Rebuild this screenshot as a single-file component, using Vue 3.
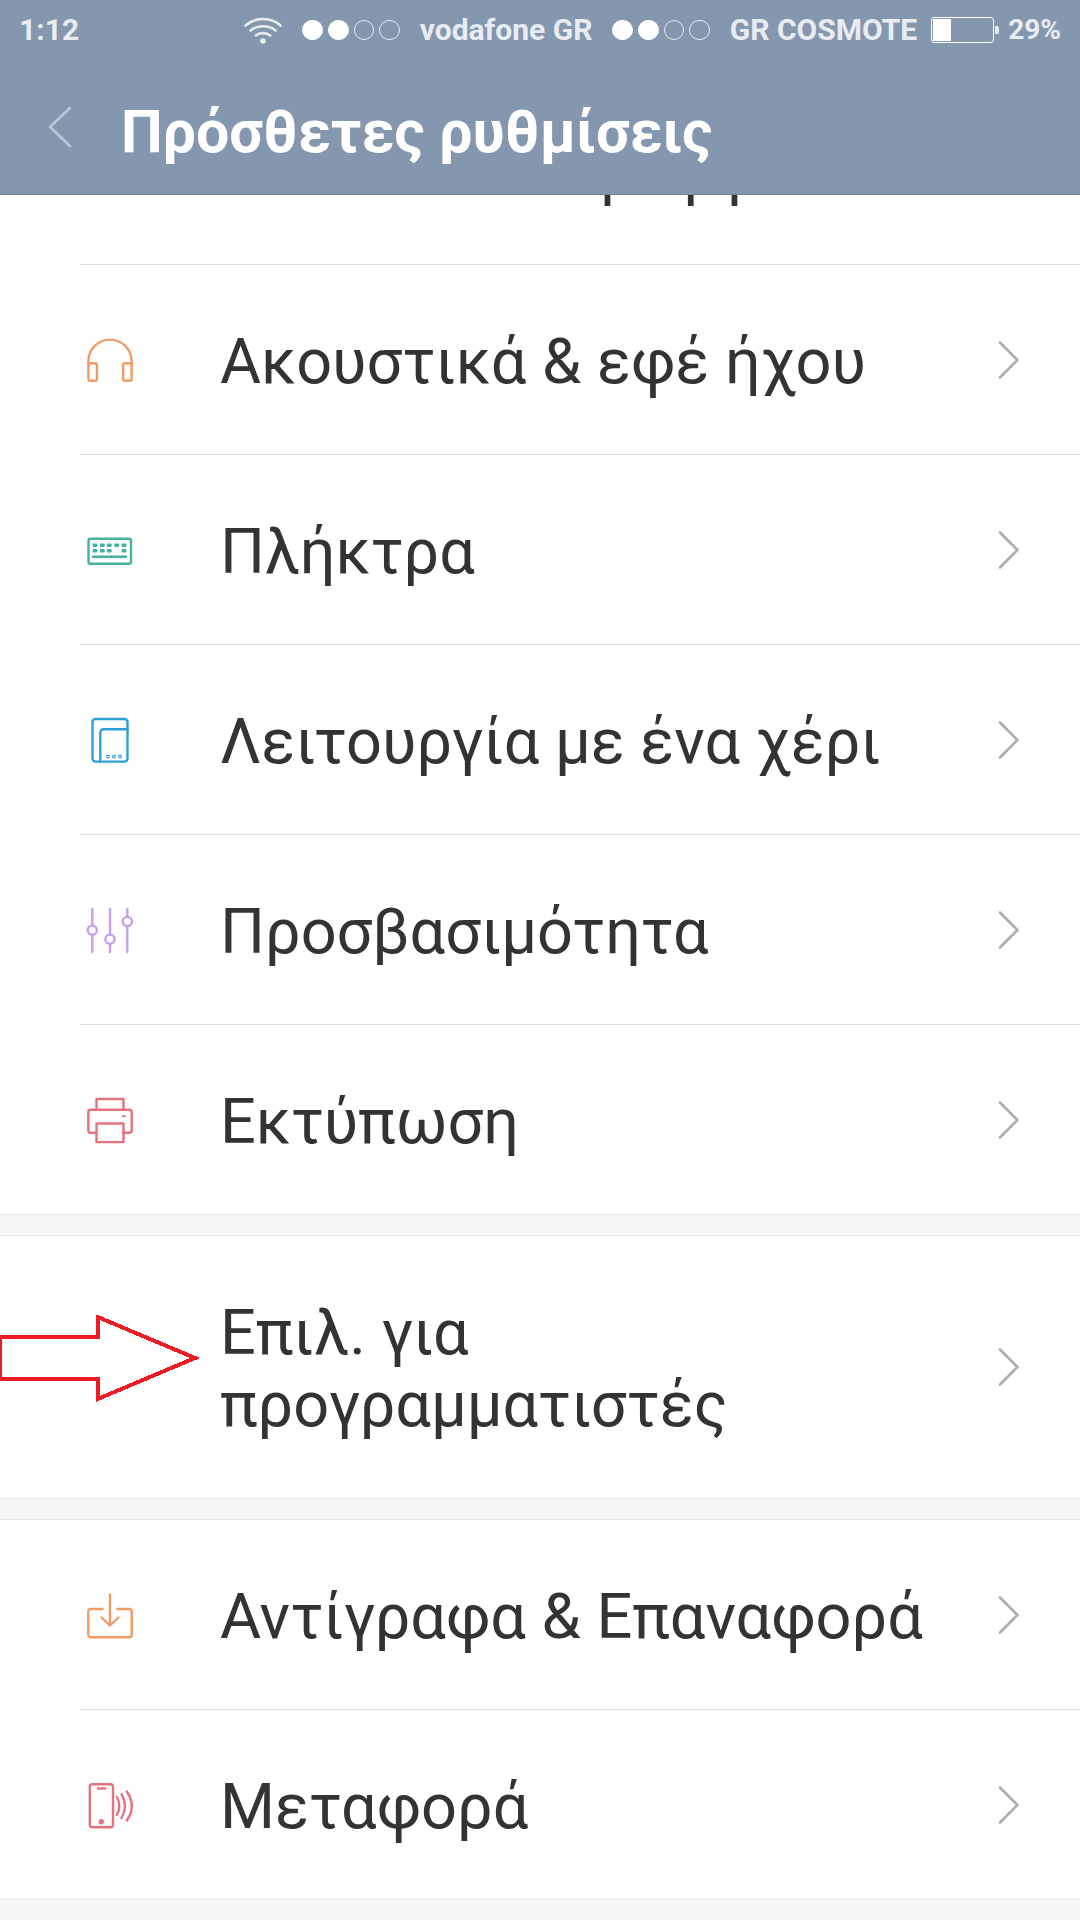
<script setup>
const sections = [
  {
    rows: [
      { label: 'Γλώσσα Εισαγωγή', cut: true },
      { label: 'Ακουστικά & εφέ ήχου', icon: 'headphones' },
      { label: 'Πλήκτρα', icon: 'keyboard' },
      { label: 'Λειτουργία με ένα χέρι', icon: 'hand' },
      { label: 'Προσβασιμότητα', icon: 'sliders' },
      { label: 'Εκτύπωση', icon: 'printer' },
    ],
  },
  { rows: [{ label: 'Επιλ. για προγραμματιστές', tall: true, marked: true }] },
  {
    rows: [
      { label: 'Αντίγραφα & Επαναφορά', icon: 'backup' },
      { label: 'Μεταφορά', icon: 'mover' },
    ],
  },
]
const signals = ['vodafone GR', 'GR COSMOTE']
const keyRows = [
  [15, 22.3, 29.3, 36.7, 44],
  [15, 22.3, 29.3, 44],
]
</script>

<template>
  <div class="screen">
    <header class="header">
      <div class="status">
        <span class="time">1:12</span>
        <svg class="wifi" width="38" height="28" viewBox="0 0 38 28" fill="none" stroke="#e8ecf1" stroke-width="2.6" stroke-linecap="round">
          <path d="M1.5 9.5C11 .8 27 .8 36.5 9.5" />
          <path d="M6.5 14.5C13 8.8 25 8.8 31.5 14.5" />
          <path d="M11.8 19.4C15.5 16.4 22.5 16.4 26.2 19.4" />
          <circle cx="19" cy="25" r="2.8" fill="#e8ecf1" stroke="none" />
        </svg>
        <template v-for="name in signals" :key="name">
          <span class="dots">
            <i class="dot on"></i><i class="dot on"></i><i class="dot"></i><i class="dot"></i>
          </span>
          <span class="carrier">{{ name }}</span>
        </template>
        <span class="battery"><i class="charge"></i></span>
        <span class="percent">29%</span>
      </div>
      <div class="titlebar">
        <svg class="back" width="26" height="44" viewBox="0 0 26 44" fill="none" stroke="#bcc7d4" stroke-width="2.6" stroke-linecap="round" stroke-linejoin="round">
          <path d="M23 3L3 22L23 41" />
        </svg>
        <h1 class="title">Πρόσθετες ρυθμίσεις</h1>
      </div>
    </header>

    <main class="list">
      <section v-for="(section, s) in sections" :key="s" class="section">
        <div v-for="row in section.rows" :key="row.label" class="row" :class="{ cut: row.cut, tall: row.tall }">
          <svg v-if="row.marked" class="pointer" width="202" height="88" viewBox="0 0 202 88" fill="none" stroke="#ed1c24" stroke-width="4" stroke-linejoin="miter" shape-rendering="crispEdges">
            <path d="M0 22.3H97.7V2L195 43L97.7 84V64.3H0Z" />
          </svg>
          <span class="glyph">
            <svg v-if="row.icon" width="60" height="60" viewBox="0 0 60 60" fill="none" stroke-width="2.4" stroke-linecap="round" stroke-linejoin="round" :class="row.icon">
              <template v-if="row.icon === 'headphones'">
                <path d="M8.4 36V31.2a21.6 21.6 0 0 1 43.2 0V36" />
                <rect x="8.4" y="33.2" width="8.5" height="17.6" rx="2" />
                <rect x="43.1" y="33.2" width="8.5" height="17.6" rx="2" />
              </template>
              <template v-else-if="row.icon === 'keyboard'">
                <rect x="8.5" y="18.7" width="42.5" height="25" rx="2" />
                <g v-for="(keys, k) in keyRows" :key="k">
                  <rect v-for="x in keys" :key="x" :x="x - 2.4" :y="23.5 + k * 5.6" width="4.8" height="3.4" rx="1" class="solid" />
                </g>
                <path d="M13 36.8H46" />
              </template>
              <template v-else-if="row.icon === 'hand'">
                <rect x="12.5" y="9" width="35" height="42.6" rx="3" />
                <path d="M20.3 51.6V22.5a3.2 3.2 0 0 1 3.2-3.2H47.5" />
                <circle cx="28" cy="46.5" r="1.4" stroke-width="1.1" />
                <circle cx="34" cy="46.5" r="1.4" stroke-width="1.1" />
                <circle cx="40" cy="46.5" r="1.4" stroke-width="1.1" />
              </template>
              <template v-else-if="row.icon === 'sliders'">
                <path d="M12.3 9V52M30 9V52M47.3 9V52" />
                <circle cx="12.3" cy="30.2" r="4.6" class="hollow" />
                <circle cx="30" cy="39.2" r="4.6" class="hollow" />
                <circle cx="47.3" cy="21.5" r="4.6" class="hollow" />
              </template>
              <template v-else-if="row.icon === 'printer'">
                <path d="M16.5 19.5V9H43.5V19.5" />
                <path d="M16.5 42.8H10.5a2.2 2.2 0 0 1-2.2-2.2V22a2.2 2.2 0 0 1 2.2-2.2H49.5a2.2 2.2 0 0 1 2.2 2.2V40.6a2.2 2.2 0 0 1-2.2 2.2H43.5" />
                <rect x="16.5" y="33.5" width="27" height="18.6" />
                <rect x="41.7" y="25.2" width="4" height="2" rx="1" class="solid" />
              </template>
              <template v-else-if="row.icon === 'backup'">
                <path d="M22.5 24H10.5a2.2 2.2 0 0 0-2.2 2.2V50a2.2 2.2 0 0 0 2.2 2.2H49.5a2.2 2.2 0 0 0 2.2-2.2V26.2a2.2 2.2 0 0 0-2.2-2.2H37.5" />
                <path d="M30 9.5V40.5M21.5 32.5L30 40.5L38.5 32.5" />
              </template>
              <template v-else-if="row.icon === 'mover'">
                <rect x="9.8" y="9.2" width="23.2" height="43" rx="2.5" />
                <path d="M18 13.5H25" />
                <circle cx="21.3" cy="46.7" r="2.7" class="solid" />
                <path d="M36.8 22Q41.8 31 36.8 40M41.5 19.2Q48.5 31 41.5 43M46.8 16.5Q56.8 31 46.8 45.5" />
              </template>
            </svg>
          </span>
          <span class="label">{{ row.label }}</span>
          <svg class="chevron" width="22" height="38" viewBox="0 0 22 38" fill="none" stroke="#adadad" stroke-width="2.6" stroke-linecap="round" stroke-linejoin="round">
            <path d="M2 1.5L19.5 19L2 36.5" />
          </svg>
        </div>
      </section>
    </main>
  </div>
</template>

<style scoped>
.screen {
  width: 1080px;
  height: 1920px;
  display: flex;
  flex-direction: column;
  overflow: hidden;
  background: #f7f7f7;
  font-family: Roboto, "Noto Sans", sans-serif;
}
.header {
  position: relative;
  z-index: 1;
  flex: none;
  height: 195px;
  box-sizing: border-box;
  background: #8497af;
  border-bottom: 1px solid #6e8098;
}
.status {
  display: flex;
  align-items: center;
  height: 60px;
  padding: 0 19px;
  color: #e8ecf1;
  font-size: 30px;
  font-weight: 700;
}
.time,
.carrier,
.percent {
  margin-bottom: 2px;
}
.time {
  margin-right: auto;
}
.dots {
  display: flex;
  gap: 5px;
  margin: 0 20px;
}
.dot {
  width: 20.6px;
  height: 20.6px;
  box-sizing: border-box;
  border: 1.5px solid #e8ecf1;
  border-radius: 50%;
}
.dot.on {
  background: #fff;
  border-color: #fff;
}
.battery {
  position: relative;
  width: 63px;
  height: 26px;
  box-sizing: border-box;
  padding: 1px;
  margin: 0 14px;
  border: 1px solid #fff;
  border-radius: 3px;
}
.battery::after {
  content: "";
  position: absolute;
  left: 63px;
  top: 8px;
  width: 4px;
  height: 8px;
  background: #e8ecf1;
  border-radius: 0 2px 2px 0;
}
.charge {
  display: block;
  width: 18px;
  height: 100%;
  background: #fff;
}
.percent {
  font-size: 28px;
}
.titlebar {
  display: flex;
  align-items: center;
  height: 134px;
  padding-left: 47px;
}
.back {
  flex: none;
  margin-right: 48px;
}
.title {
  margin: 9px 0 0;
  color: #fff;
  font-size: 59px;
  font-weight: 700;
  line-height: 72px;
}
.list {
  flex: 1;
  min-height: 0;
  overflow: hidden;
}
.section {
  background: #fff;
  border-bottom: 1px solid #e6e6e6;
  margin-bottom: 20px;
}
.section + .section {
  border-top: 1px solid #e6e6e6;
}
.row {
  position: relative;
  display: flex;
  align-items: center;
  height: 190px;
  box-sizing: border-box;
  margin-left: 80px;
  padding-right: 60px;
  border-bottom: 1px solid #dcdcdc;
  color: #333;
}
.row:last-child {
  border-bottom: 0;
  height: 189px;
}
.row.cut {
  margin-top: -120px;
}
.row.tall {
  height: 262px;
}
.glyph {
  flex: none;
  width: 140px;
  height: 60px;
}
.label {
  flex: 1;
  min-width: 0;
  padding-top: 4px;
  font-size: 63px;
  line-height: 72px;
}
.tall .label {
  padding-right: 120px;
}
.chevron {
  flex: none;
}
.pointer {
  position: absolute;
  left: -80px;
  top: 79px;
}
.headphones { stroke: #f39b66; }
.keyboard { stroke: #45b39d; color: #45b39d; }
.hand { stroke: #2e9fd5; }
.sliders { stroke: #c3a1ec; }
.printer { stroke: #e4727f; color: #e4727f; }
.backup { stroke: #f39b66; }
.mover { stroke: #e4727f; color: #e4727f; }
.solid {
  fill: currentColor;
  stroke: none;
}
.hollow {
  fill: #fff;
}
</style>
